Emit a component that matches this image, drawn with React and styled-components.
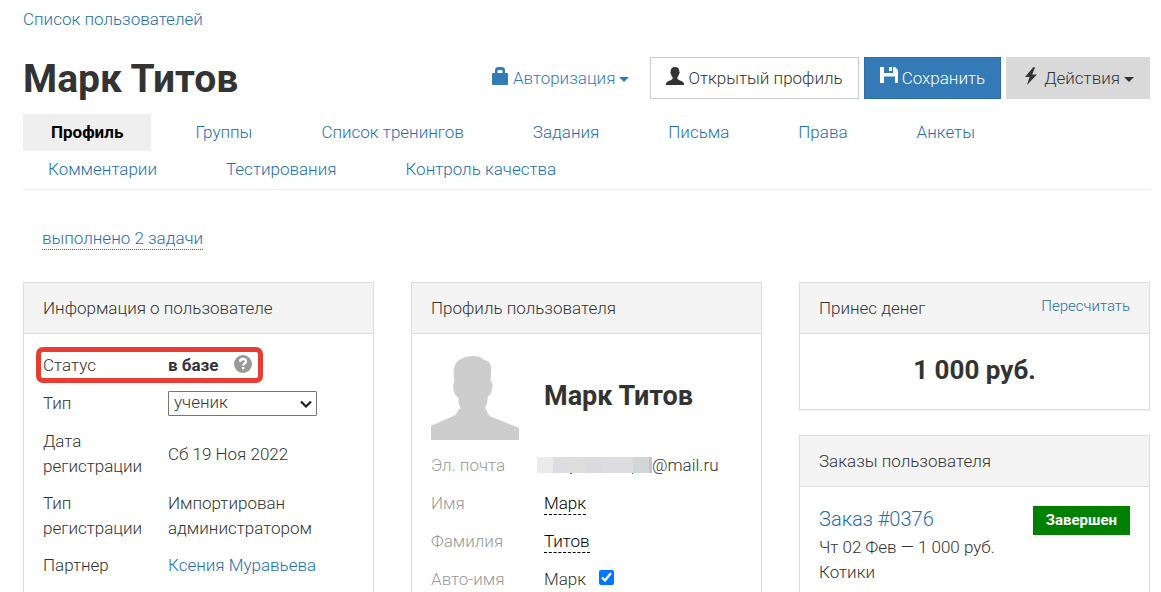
import React, { useState } from 'react';
import styled, { createGlobalStyle } from 'styled-components';

const GlobalStyle = createGlobalStyle`
  * {
    box-sizing: border-box;
  }
  html {
    scrollbar-width: none;
  }
  body {
    margin: 0;
    background: #fff;
    color: #333;
    font-family: Roboto, 'Open Sans', sans-serif;
    font-size: 17px;
    font-weight: 300;
    line-height: 25px;
  }
  button, select, input {
    font: inherit;
    color: inherit;
  }
`;

const Page = styled.div`
  padding: 7px 11px 0 23px;
`;

const Link = styled.a`
  color: #1f6fb2;
  text-decoration: none;
`;

const Header = styled.header`
  display: flex;
  align-items: center;
  justify-content: space-between;
  margin-top: 25px;
  h1 {
    margin: 0;
    padding-top: 2px;
    font-size: 39px;
    line-height: 40px;
    font-weight: 700;
  }
`;

const Toolbar = styled.div`
  display: flex;
  gap: 5px;
`;

const Button = styled.button`
  display: flex;
  align-items: center;
  gap: 4px;
  height: 42px;
  padding: 0 15px;
  white-space: nowrap;
  border: 1px solid ${props => props.$border};
  background: ${props => props.$bg};
  color: ${props => props.$color};
  svg.icon {
    width: 18px;
    height: 18px;
    margin-bottom: 4px;
  }
`;

const Caret = styled.span`
  margin-top: 2px;
  border-top: 5px solid;
  border-left: 5px solid transparent;
  border-right: 5px solid transparent;
`;

const Tabs = styled.nav`
  display: flex;
  flex-wrap: wrap;
  column-gap: 19px;
  margin-top: 15px;
  padding-bottom: 1px;
  border-bottom: 1px solid #eee;
`;

const Tab = styled.a`
  padding: 6px ${props => props.$active ? '28px' : '25px'};
  text-decoration: none;
  color: ${props => props.$active ? '#000' : '#1f6fb2'};
  background: ${props => props.$active ? '#efefef' : 'transparent'};
  font-weight: ${props => props.$active ? 700 : 300};
`;

const Tasks = styled.div`
  padding: 36px 19px 31px;
  a {
    display: inline-block;
    line-height: 22px;
    border-bottom: 1px dotted #1f6fb2;
  }
`;

const Columns = styled.div`
  display: grid;
  grid-template-columns: repeat(3, minmax(0, 1fr));
  gap: 37px;
  align-items: start;
`;

const Column = styled.div`
  display: grid;
  gap: 25px;
`;

const Card = styled.section`
  border: 1px solid #ddd;
  box-shadow: 0 1px 1px rgba(0,0,0, 0.05);
`;

const CardHead = styled.div`
  display: flex;
  justify-content: space-between;
  padding: 13px 19px 12px;
  background: #f4f4f4;
  border-bottom: 1px solid #ddd;
  h2 {
    margin: 0;
    font: inherit;
  }
  a {
    font-size: 15px;
    line-height: 20px;
  }
`;

const CardBody = styled.div`
  position: relative;
  padding: 13px 19px;
`;

const Info = styled.table`
  width: 100%;
  border-collapse: collapse;
  table-layout: fixed;
  th, td {
    padding: 6px 0;
    text-align: left;
    font-weight: 300;
  }
  th {
    width: 125px;
    padding-right: 20px;
  }
  b {
    font-weight: 700;
  }
`;

const SelectBox = styled.div`
  position: relative;
  width: 149px;
  margin: 1px 0;
  select {
    display: block;
    width: 100%;
    height: 25px;
    padding: 0 24px 3px 5px;
    border: 1px solid #767676;
    border-radius: 1px;
    background: #fff;
    line-height: 20px;
    appearance: none;
  }
  svg {
    position: absolute;
    top: 9px;
    right: 5px;
    pointer-events: none;
  }
`;

const Help = styled.button`
  width: 18px;
  height: 18px;
  margin: -6px 0 0 15px;
  padding: 0;
  border: none;
  background: none;
  vertical-align: middle;
  svg {
    display: block;
  }
`;

const Highlight = styled.div`
  position: absolute;
  top: 13px;
  left: 12px;
  width: 227px;
  height: 36px;
  border: 5px solid #e63c32;
  border-radius: 7px;
  pointer-events: none;
`;

const Person = styled.div`
  display: flex;
  align-items: center;
  gap: 25px;
  padding: 9px 0 13px;
  svg {
    flex: none;
  }
  h3 {
    margin: 0;
    padding-bottom: 4px;
    font-size: 27px;
    line-height: 32px;
    font-weight: 700;
  }
`;

const Fields = styled.div`
  display: grid;
  gap: 13px;
`;

const Field = styled.div`
  display: grid;
  grid-template-columns: 106px 1fr;
  align-items: center;
  .name {
    color: #999;
  }
  .value {
    display: flex;
    align-items: center;
    padding-left: ${props => props.$flush ? 0 : '7px'};
  }
  button {
    padding: 0;
    border: none;
    border-bottom: 1px dashed #000;
    background: none;
    color: #000;
    line-height: 22px;
  }
  input {
    width: 15px;
    height: 15px;
    margin: 0 0 4px 13px;
  }
`;

const Amount = styled.div`
  padding: 8px 0 11px;
  font-size: 26px;
  line-height: 30px;
  font-weight: 700;
  text-align: center;
`;

const Order = styled.div`
  display: flex;
  justify-content: space-between;
  align-items: flex-start;
  padding: 6px 0;
  .title {
    display: block;
    margin: 1px 0 3px;
    font-size: 20px;
  }
`;

const Badge = styled.span`
  padding: 2px 13px;
  background: #008000;
  color: #fff;
  font-size: 15px;
  font-weight: 700;
`;

const LockIcon = () => (
  <svg className='icon' viewBox='0 0 18 18' fill='currentColor' aria-hidden='true'>
    <path d='M4 6V3.500Q4 0 7.500 0h3Q14 0 14 3.500V6h2q1 0 1 1v10q0 1-1 1H2q-1 0-1-1V7q0-1 1-1zM6.500 6h5V4q0-1-1-1h-3q-1 0-1 1z' />
  </svg>
);

const UserIcon = () => (
  <svg className='icon' viewBox='0 0 18 18' fill='currentColor' aria-hidden='true'>
    <path d='M9 0c3 0 4.500 2 4.300 4.500.7.500.4 1.800-.2 2.300-.3 1.700-1 2.700-1.700 3.400-.2 1.200.1 2 1 2.500 1.500.8 5.600 2 5.600 4v1.300H0v-1.300c0-2 4.100-3.200 5.600-4 .9-.5 1.200-1.300 1-2.500C5.900 9.500 5.200 8.500 4.900 6.800c-.6-.5-.9-1.800-.2-2.300C4.500 2 6 0 9 0z' />
  </svg>
);

const SaveIcon = () => (
  <svg className='icon' viewBox='0 0 18 18' fill='currentColor' aria-hidden='true'>
    <path d='M0 0h4v6h9V0h2l3 3v13h-3V9.500H4V16H0zM9 0h3v4H9z' />
  </svg>
);

const BoltIcon = () => (
  <svg className='icon' viewBox='0 0 18 18' fill='currentColor' aria-hidden='true'>
    <path d='M11.500 0 3 10h4.500L5 18 15 7.500h-4.800L13 .5z' />
  </svg>
);

const Avatar = () => (
  <svg width='88' height='84' viewBox='0 0 88 84' fill='#cdcdcd' role='img' aria-label='Фото'>
    <path d='M42 0c5 0 9 1.500 11 4 6 1 7.500 5 7.200 10l-.7 11c2.500 2 2.500 5 1.500 8.500-.5 3-1.500 6-4 6.500-1 4 0 8-3.500 12 3 1.500 2 5 6 8.500L88 72v12H0V70l20-9c6-2 6-5 8-8l2-.500C27 49 28 44 27 41c-3-1-4-5-4.500-8-.5-3-.5-6 1-8-1-6-1.500-10 0-14C25 4 33 0 42 0z' />
  </svg>
);

const Redacted = () => (
  <svg width='115' height='17' viewBox='0 0 115 17' aria-hidden='true'>
    {['#ebebeb', '#dedce0', '#dededc', '#dbdade', '#dddce0', '#dddddf', '#d2d6d6', '#dededc'].map((color, i) => (
      <rect key={i} x={i * 16} width='16' height='16' fill={color} />
    ))}
    <path d='M112 0h3v16h-3z' fill='#c4c4cc' />
    <path d='M33 16h2v1h-2zM95 16h1v1h-1z' fill='#666' />
  </svg>
);

const tabs = ['Профиль', 'Группы', 'Список тренингов', 'Задания', 'Письма', 'Права', 'Анкеты', 'Комментарии', 'Тестирования', 'Контроль качества'];

const App = () => {
  const [active, setActive] = useState('Профиль');
  const [type, setType] = useState('ученик');
  const [autoName, setAutoName] = useState(true);

  return (
    <>
      <GlobalStyle />
      <Page>
        <Link href='#users'>Список пользователей</Link>
        <Header>
          <h1>Марк Титов</h1>
          <Toolbar>
            <Button $bg='transparent' $border='transparent' $color='#337ab7'><LockIcon />Авторизация <Caret /></Button>
            <Button $bg='#fff' $border='#ccc' $color='#333'><UserIcon />Открытый профиль</Button>
            <Button $bg='#337ab7' $border='#2e6da4' $color='#fff'><SaveIcon />Сохранить</Button>
            <Button $bg='#d9d9d9' $border='#d9d9d9' $color='#333'><BoltIcon />Действия <Caret /></Button>
          </Toolbar>
        </Header>
        <Tabs>
          {tabs.map(name => (
            <Tab key={name} href='#tab' $active={name === active} onClick={() => setActive(name)}>{name}</Tab>
          ))}
        </Tabs>
        <Tasks><Link href='#tasks'>выполнено 2 задачи</Link></Tasks>
        <Columns>
          <Card>
            <CardHead><h2>Информация о пользователе</h2></CardHead>
            <CardBody>
              <Info>
                <tbody>
                  <tr>
                    <th>Статус</th>
                    <td>
                      <b>в базе</b>
                      <Help aria-label='Справка'>
                        <svg width='18' height='18' viewBox='0 0 18 18'>
                          <circle cx='9' cy='9' r='9' fill='#999' />
                          <path d='M6 6.800C6 4.800 7.300 4 9 4s3 1 3 2.600C12 8.500 9.200 8.600 9.200 10.500M9.200 12v2.300' fill='none' stroke='#fff' strokeWidth='2.400' />
                        </svg>
                      </Help>
                    </td>
                  </tr>
                  <tr>
                    <th><label htmlFor='type'>Тип</label></th>
                    <td>
                      <SelectBox>
                        <select id='type' value={type} onChange={e => setType(e.target.value)}>
                          <option>ученик</option>
                        </select>
                        <svg width='12' height='8' viewBox='0 0 12 8' aria-hidden='true'>
                          <path d='M1 1.500l5 5 5-5' fill='none' stroke='#222' strokeWidth='2.200' />
                        </svg>
                      </SelectBox>
                    </td>
                  </tr>
                  <tr>
                    <th>Дата регистрации</th>
                    <td>Сб 19 Ноя 2022</td>
                  </tr>
                  <tr>
                    <th>Тип регистрации</th>
                    <td>Импортирован администратором</td>
                  </tr>
                  <tr>
                    <th>Партнер</th>
                    <td><Link href='#partner'>Ксения Муравьева</Link></td>
                  </tr>
                </tbody>
              </Info>
              <Highlight />
            </CardBody>
          </Card>
          <Card>
            <CardHead><h2>Профиль пользователя</h2></CardHead>
            <CardBody>
              <Person>
                <Avatar />
                <h3>Марк Титов</h3>
              </Person>
              <Fields>
                <Field $flush>
                  <span className='name'>Эл. почта</span>
                  <span className='value'><Redacted />@mail.ru</span>
                </Field>
                <Field>
                  <span className='name'>Имя</span>
                  <span className='value'><button>Марк</button></span>
                </Field>
                <Field>
                  <span className='name'>Фамилия</span>
                  <span className='value'><button>Титов</button></span>
                </Field>
                <Field>
                  <label className='name' htmlFor='auto'>Авто-имя</label>
                  <span className='value'>
                    Марк
                    <input id='auto' type='checkbox' checked={autoName} onChange={e => setAutoName(e.target.checked)} />
                  </span>
                </Field>
              </Fields>
            </CardBody>
          </Card>
          <Column>
            <Card>
              <CardHead>
                <h2>Принес денег</h2>
                <Link href='#recount'>Пересчитать</Link>
              </CardHead>
              <CardBody><Amount>1 000 руб.</Amount></CardBody>
            </Card>
            <Card>
              <CardHead><h2>Заказы пользователя</h2></CardHead>
              <CardBody>
                <Order>
                  <div>
                    <Link className='title' href='#order'>Заказ #0376</Link>
                    <div>Чт 02 Фев — 1 000 руб.</div>
                    <div>Котики</div>
                  </div>
                  <Badge>Завершен</Badge>
                </Order>
              </CardBody>
            </Card>
          </Column>
        </Columns>
      </Page>
    </>
  );
};

export default App;
